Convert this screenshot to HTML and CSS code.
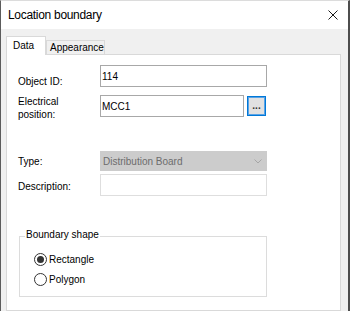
FILE: index.html
```html
<!DOCTYPE html>
<html lang="en">
<head>
  <meta charset="UTF-8">
  <title>Location boundary</title>
  <link rel="stylesheet" href="styles.css">
</head>
<body>
  <div class="dialog">
    <div class="titlebar">
      <span class="title">Location boundary</span>
      <span class="close-btn">
        <svg width="10" height="10" viewBox="0 0 10 10">
          <path d="M0.5 0.5L9.5 9.5M9.5 0.5L0.5 9.5" stroke="#1a1a1a" stroke-width="1" fill="none" />
        </svg>
      </span>
    </div>

    <div class="dialog-body">
      <div class="tabs">
        <div class="tab tab-active">Data</div>
        <div class="tab">Appearance</div>
      </div>

      <div class="tab-panel">
        <div class="field field-id">
          <label class="field-label">Object ID:</label>
          <input class="text-input" type="text" value="114">
        </div>

        <div class="field field-position">
          <label class="field-label">Electrical<br>position:</label>
          <input class="text-input text-input-short" type="text" value="MCC1">
          <button class="browse-btn">...</button>
        </div>

        <div class="field field-type">
          <label class="field-label">Type:</label>
          <div class="combo">
            <span>Distribution Board</span>
            <svg width="8" height="5" viewBox="0 0 8 5">
              <path d="M0.5 0.5L4 4L7.5 0.5" stroke="#a6a6a6" stroke-width="1" fill="none" />
            </svg>
          </div>
        </div>

        <div class="field field-desc">
          <label class="field-label">Description:</label>
          <input class="text-input text-input-disabled" type="text" value="">
        </div>

        <fieldset class="groupbox">
          <legend>Boundary shape</legend>
          <div class="radio-row">
            <span class="radio radio-checked"></span>
            <span>Rectangle</span>
          </div>
          <div class="radio-row">
            <span class="radio"></span>
            <span>Polygon</span>
          </div>
        </fieldset>
      </div>
    </div>
  </div>
</body>
</html>
```

FILE: styles.css
```css
* {
  box-sizing: border-box;
}

body {
  margin: 0;
  font-family: "Liberation Sans", Arial, sans-serif;
  font-size: 10px;
  color: #000;
  background: #fff;
  overflow: hidden;
}

.dialog {
  width: 350px;
  height: 311px;
  border-top: 1px solid #dcdcdc;
  border-left: 1px solid #5c5c5c;
  border-right: 2px solid #4d4d4d;
  background: #f0f0f0;
  display: flex;
  flex-direction: column;
  overflow: hidden;
}

.titlebar {
  height: 28px;
  flex: none;
  background: #fff;
  display: flex;
  align-items: center;
  justify-content: space-between;
  padding: 0 10px 0 7px;
}

.title {
  font-size: 12px;
  letter-spacing: -0.3px;
}

.close-btn {
  display: flex;
  width: 10px;
  height: 10px;
}

.dialog-body {
  flex: 1;
  display: flex;
  flex-direction: column;
  padding: 7px 7px 0 5px;
}

/* tab strip */
.tabs {
  height: 18px;
  flex: none;
  display: flex;
  align-items: flex-end;
}

.tab {
  height: 14px;
  width: 59px;
  border: 1px solid #d9d9d9;
  border-bottom: none;
  background: #f0f0f0;
  line-height: 13px;
  padding-left: 3px;
}

.tab-active {
  position: relative;
  z-index: 1;
  width: 40px;
  height: 19px;
  margin-bottom: -1px;
  padding: 2px 0 0 6px;
  background: #fff;
}

.tab-panel {
  flex: 1;
  background: #fff;
  border: 1px solid #d9d9d9;
  padding: 10px 0 0 11px;
}

/* form rows */
.field {
  display: flex;
  align-items: flex-start;
}

.field-label {
  width: 82px;
  flex: none;
  line-height: 13px;
}

.field-id .field-label {
  padding-top: 10px;
}

.field-position {
  margin-top: 7px;
}

.field-type {
  margin-top: 30px;
}

.field-type .field-label {
  padding-top: 4px;
}

.field-desc {
  margin-top: 3px;
}

.field-desc .field-label {
  padding-top: 6px;
}

.text-input {
  width: 167px;
  height: 22px;
  margin: 0;
  border: 1px solid #a8a8a8;
  padding: 0 1px;
  font: inherit;
  color: #000;
  background: #fff;
  outline: none;
}

.text-input-short {
  width: 144px;
}

.text-input-disabled {
  border-color: #dedede;
}

.browse-btn {
  width: 19px;
  height: 20px;
  margin: 1px 0 0 3px;
  padding: 0;
  border: 1px solid #0078d7;
  box-shadow: inset 0 0 0 1px #5aa3e6;
  background: #e1e1e1;
  font: inherit;
  font-weight: bold;
  line-height: 16px;
  color: #333;
  cursor: pointer;
}

.combo {
  width: 167px;
  height: 20px;
  background: #cccccc;
  color: #6d6d6d;
  display: flex;
  align-items: center;
  justify-content: space-between;
  padding: 0 5px 0 3px;
}

/* boundary shape group */
.groupbox {
  width: 248px;
  margin: 32px 0 0 1px;
  padding: 4px 0 7px 5px;
  border: 1px solid #dcdcdc;
}

.groupbox legend {
  padding: 0 1px 4px;
  line-height: 13px;
}

.radio-row {
  height: 20px;
  margin-left: 9px;
  display: flex;
  align-items: center;
  gap: 2px;
}

.radio {
  width: 13px;
  height: 13px;
  border: 1px solid #333;
  border-radius: 50%;
  display: flex;
  align-items: center;
  justify-content: center;
}

.radio-checked::after {
  content: '';
  width: 7px;
  height: 7px;
  border-radius: 50%;
  background: #333;
}
```
